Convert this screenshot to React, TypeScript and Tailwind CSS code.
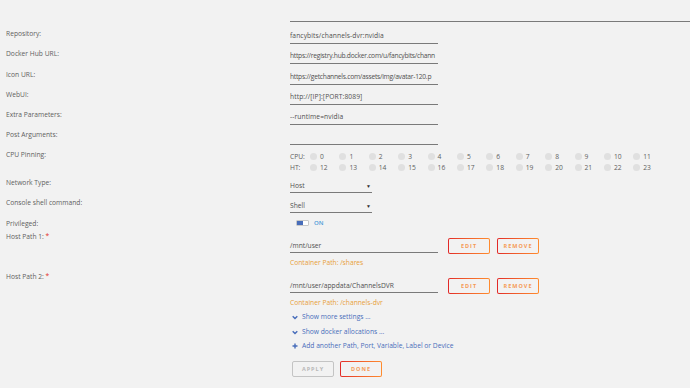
import React from 'react';

// Constants
const CPU = Array.from({ length: 12 }, (_, i) => i);
const HT = Array.from({ length: 12 }, (_, i) => i + 12);

const Label = ({ children, required }: { children: React.ReactNode; required?: boolean }) => (
  <div className="w-[284px] shrink-0 leading-[10px] text-[#5e5e5e]">
    {children}
    {required && <span className="text-[#e22828]"> *</span>}
  </div>
);

const InputRow = ({ label, value, h, tight }: { label: string; value: string; h: string; tight?: boolean }) => (
  <div className={`flex items-end ${h}`}>
    <div className="mb-[5px]">
      <Label>{label}</Label>
    </div>
    <div
      className={`w-[148px] overflow-hidden whitespace-nowrap border-b border-[#7a7a7a] pb-[2px] leading-[10px] text-[#505050] ${
        tight ? 'tracking-[-0.25px]' : 'tracking-[0.1px]'
      }`}
    >
      {value || '\u00a0'}
    </div>
  </div>
);

const SelectRow = ({ label, value }: { label: string; value: string }) => (
  <div className="flex h-[20px] items-end">
    <div className="mb-[5px]">
      <Label>{label}</Label>
    </div>
    <div className="flex w-[82px] items-center justify-between border-b border-[#7a7a7a] pb-[1px] leading-[10px] text-[#505050]">
      <span>{value}</span>
      <span className="mr-[1px] text-[5px] text-[#333]">▼</span>
    </div>
  </div>
);

const Cores = ({ name, cores }: { name: string; cores: number[] }) => (
  <div className="flex h-[11px] items-center leading-[10px] text-[#5e5e5e]">
    <span className="w-[20px]">{name}</span>
    {cores.map(c => (
      <div key={c} className="flex w-[29.4px] items-center">
        <span className="h-[7px] w-[7px] rounded-full bg-[#e0e0e0]" />
        <span className="ml-[3px]">{c}</span>
      </div>
    ))}
  </div>
);

const OutlineButton = ({ children }: { children: string }) => (
  <div className="rounded-[2px] bg-gradient-to-r from-[#e22828] to-[#ff8c2f] p-[1px]">
    <div className="flex h-[14px] w-[40px] items-center justify-center rounded-[1px] bg-[#f2f2f2] text-[5.5px] font-bold tracking-[1px] text-[#f59a55]">
      {children}
    </div>
  </div>
);

const HostPath = ({ label, value, container }: { label: string; value: string; container: string }) => (
  <div className="flex h-[40px]">
    <div className="pt-[5px]">
      <Label required>{label}</Label>
    </div>
    <div className="pt-[11px]">
      <div className="flex items-end">
        <div className="mb-[1px] w-[148px] border-b border-[#7a7a7a] pb-[1px] leading-[10px] text-[#505050]">{value}</div>
        <div className="ml-[10px] flex gap-[7px]">
          <OutlineButton>EDIT</OutlineButton>
          <OutlineButton>REMOVE</OutlineButton>
        </div>
      </div>
      <div className="mt-[4px] leading-[10px] text-[#e8a03a]">Container Path: {container}</div>
    </div>
  </div>
);

const Chevron = () => (
  <svg width="6" height="5" viewBox="0 0 6 5" className="mr-[4px]">
    <path d="M0.7 1.2 L3 3.6 L5.3 1.2" fill="none" stroke="#486dba" strokeWidth="1.4" />
  </svg>
);

const Plus = () => (
  <svg width="6" height="6" viewBox="0 0 6 6" className="mr-[4px]">
    <path d="M3 0.5 V5.5 M0.5 3 H5.5" fill="none" stroke="#486dba" strokeWidth="1.4" />
  </svg>
);

export default function App() {
  return (
    <div className="h-[388px] w-[690px] overflow-hidden bg-[#f2f2f2] pl-[6px] text-[6.7px] font-['Open_Sans',sans-serif]">
      {/* Cut-off field above */}
      <div className="ml-[284px] h-[22px] border-b border-[#7a7a7a]" />

      <InputRow label="Repository:" value="fancybits/channels-dvr:nvidia" h="h-[22px]" />
      <InputRow label="Docker Hub URL:" value="https://registry.hub.docker.com/u/fancybits/chann" h="h-[20px]" tight />
      <InputRow label="Icon URL:" value="https://getchannels.com/assets/img/avatar-120.p" h="h-[21px]" tight />
      <InputRow label="WebUI:" value="http://[IP]:[PORT:8089]" h="h-[20px]" />
      <InputRow label="Extra Parameters:" value="--runtime=nvidia" h="h-[20px]" />
      <InputRow label="Post Arguments:" value="" h="h-[20px]" />

      {/* CPU pinning */}
      <div className="flex h-[28px]">
        <div className="pt-[5px]">
          <Label>CPU Pinning:</Label>
        </div>
        <div className="pt-[6px]">
          <Cores name="CPU:" cores={CPU} />
          <Cores name="HT:" cores={HT} />
        </div>
      </div>

      <SelectRow label="Network Type:" value="Host" />
      <SelectRow label="Console shell command:" value="Shell" />

      {/* Privileged */}
      <div className="flex h-[14px]">
        <div className="pt-[6px]">
          <Label>Privileged:</Label>
        </div>
        <div className="flex items-center pl-[6px] pt-[6px]">
          <div className="flex h-[6px] w-[13px] overflow-hidden rounded-[1px] border border-[#c8c8c8] bg-white">
            <div className="w-[6px] bg-[#486dba]" />
          </div>
          <span className="ml-[5px] text-[6px] font-semibold leading-[10px] text-[#4a9ad8]">ON</span>
        </div>
      </div>

      <HostPath label="Host Path 1:" value="/mnt/user" container="/shares" />
      <HostPath label="Host Path 2:" value="/mnt/user/appdata/ChannelsDVR" container="/channels-dvr" />

      {/* Links and actions */}
      <div className="ml-[286px] text-[#486dba]">
        <div className="mt-[5px] flex items-center leading-[10px]">
          <Chevron />
          Show more settings ...
        </div>
        <div className="mt-[5px] flex items-center leading-[10px]">
          <Chevron />
          Show docker allocations ...
        </div>
        <div className="mt-[4px] flex items-center leading-[10px]">
          <Plus />
          Add another Path, Port, Variable, Label or Device
        </div>
        <div className="mt-[10px] flex gap-[6px]">
          <div className="flex h-[16px] w-[42px] items-center justify-center rounded-[2px] border border-[#c4c4c4] text-[5.5px] font-bold tracking-[1px] text-[#b8b8b8]">
            APPLY
          </div>
          <div className="rounded-[2px] bg-gradient-to-r from-[#e22828] to-[#ff8c2f] p-[1px]">
            <div className="flex h-[14px] w-[40px] items-center justify-center rounded-[1px] bg-[#f2f2f2] text-[5.5px] font-bold tracking-[1px] text-[#f59a55]">
              DONE
            </div>
          </div>
        </div>
      </div>
    </div>
  );
}
